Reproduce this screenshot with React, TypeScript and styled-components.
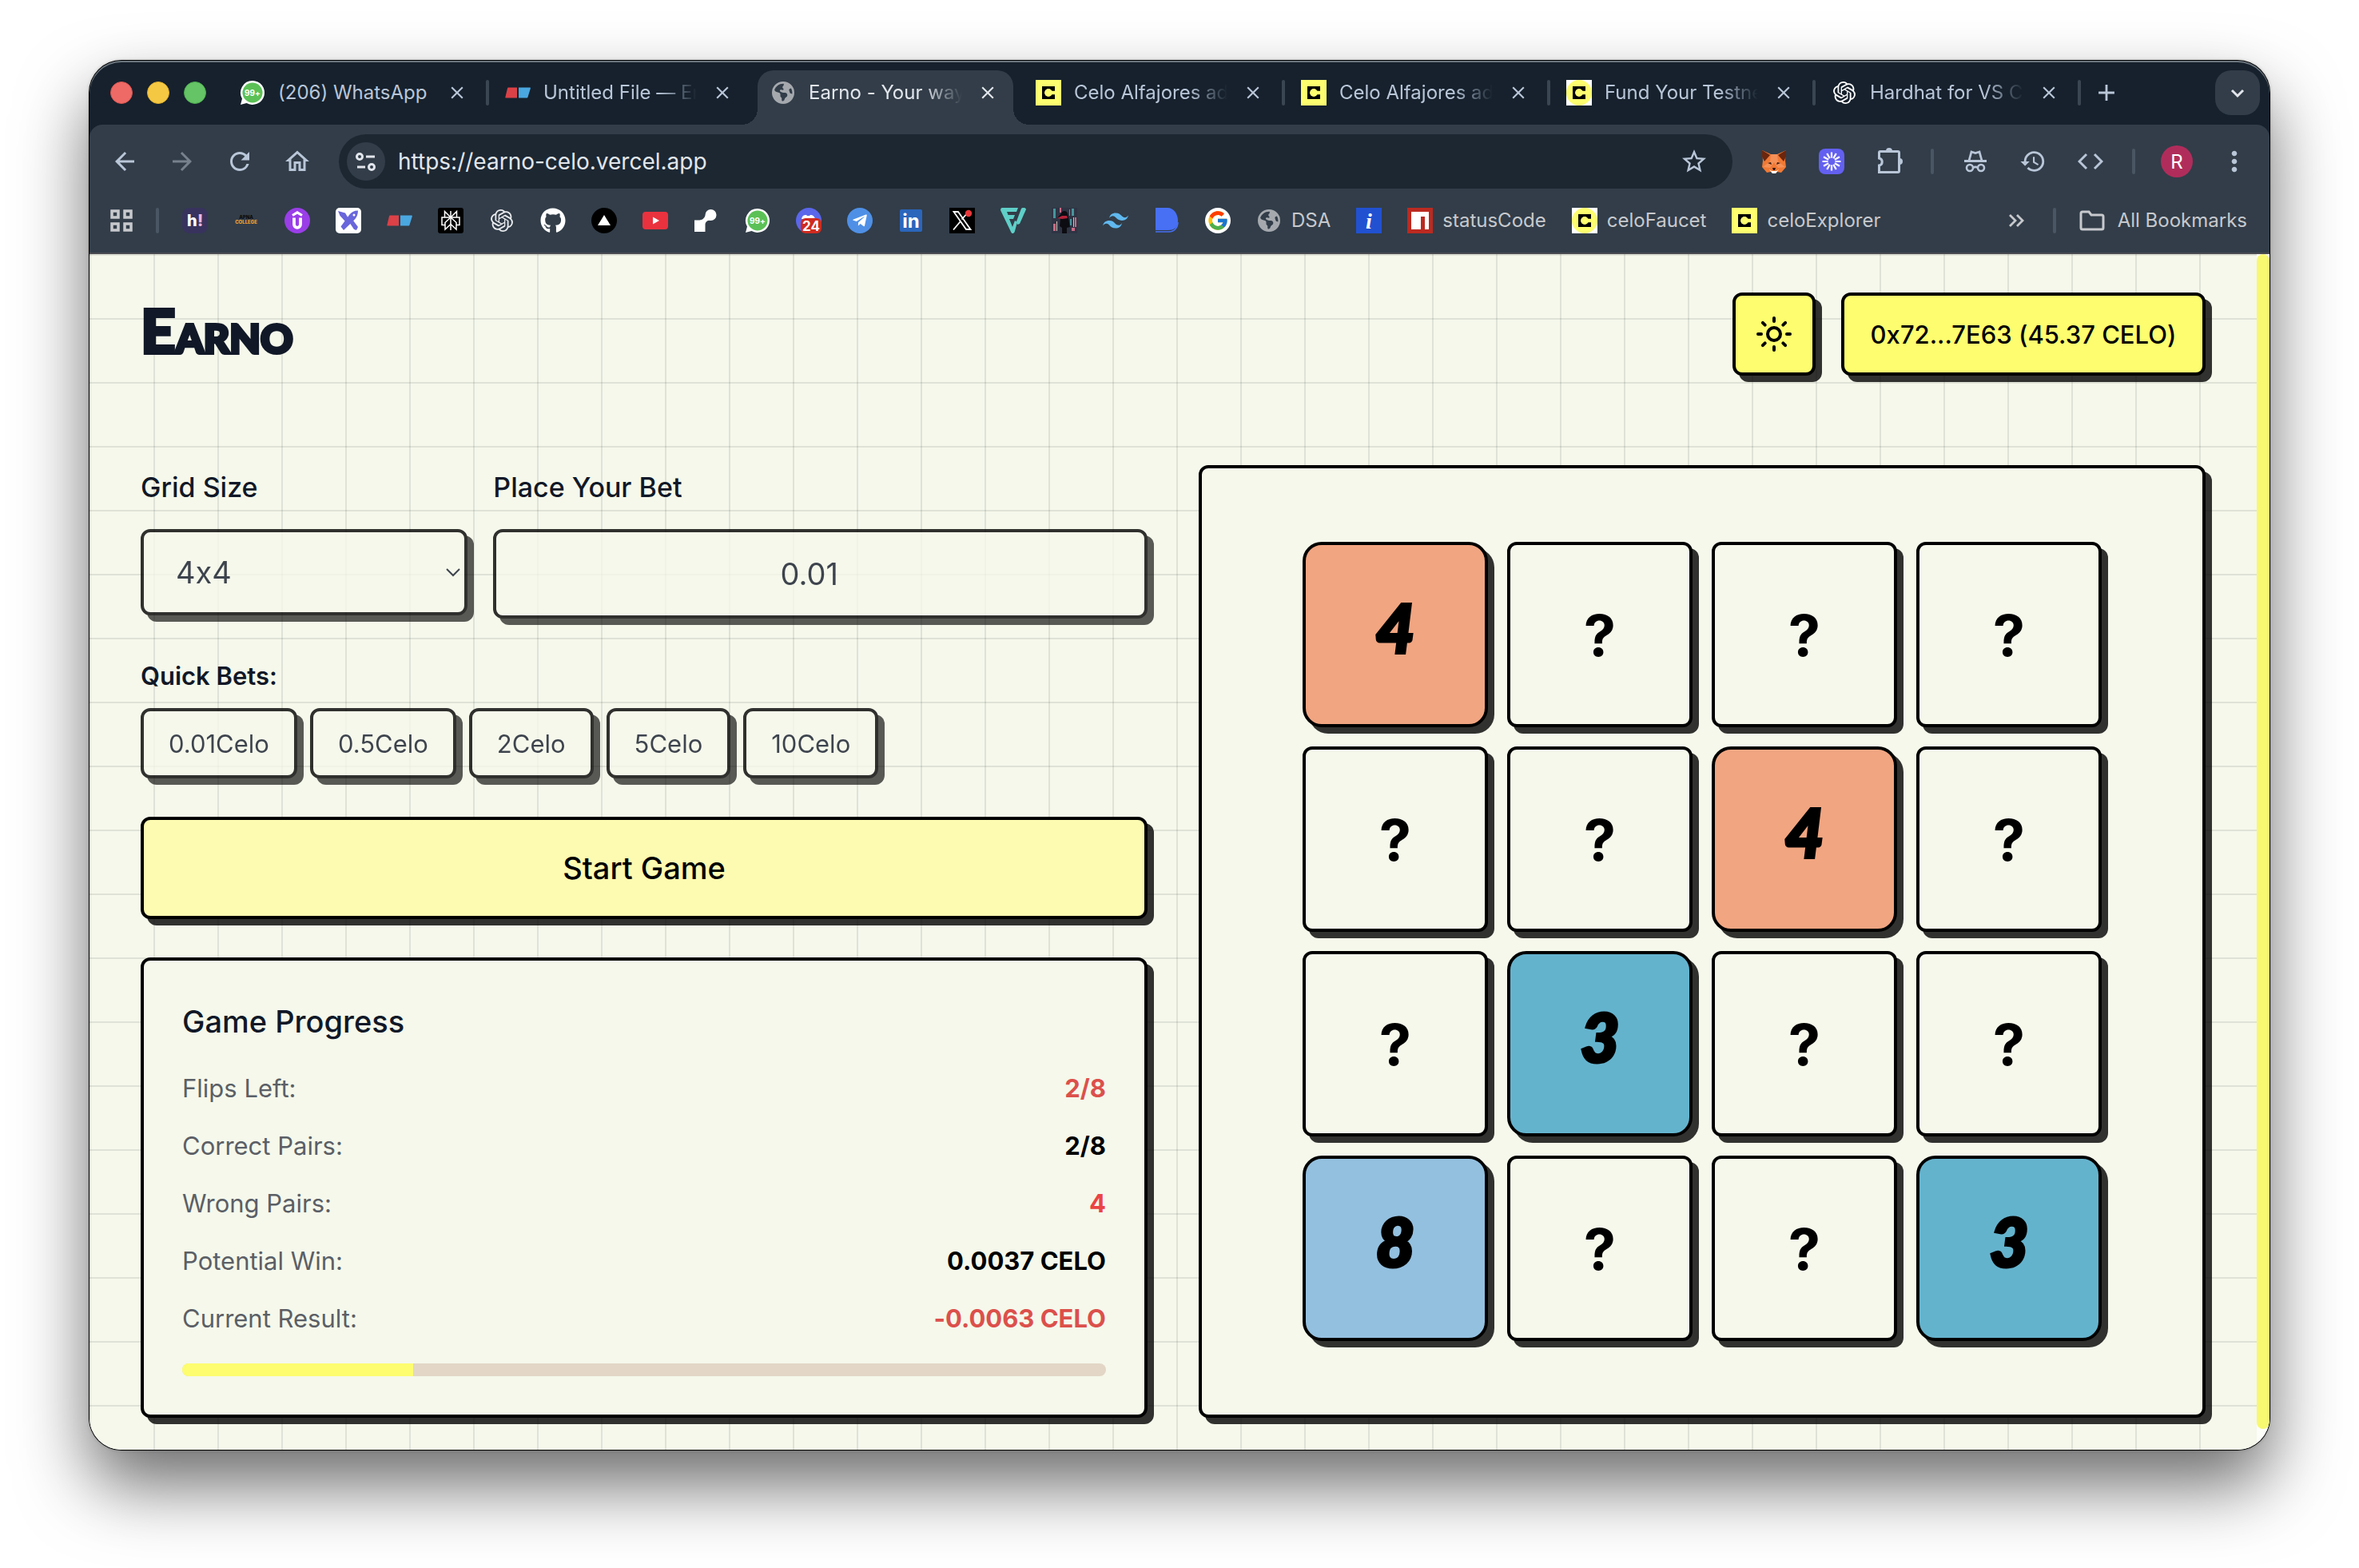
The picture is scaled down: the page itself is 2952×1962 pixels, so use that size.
import React, { useState } from "react";
import styled, { createGlobalStyle } from "styled-components";
import { Sun } from "lucide-react";
import {
  MdArrowBack,
  MdArrowForward,
  MdRefresh,
  MdOutlineHome,
  MdStarOutline,
  MdHistory,
  MdMoreVert,
  MdClose,
  MdAdd,
} from "react-icons/md";
import { FaEarthAmericas } from "react-icons/fa6";
import { FaGithub, FaTelegramPlane } from "react-icons/fa";
import { SiOpenai, SiTailwindcss } from "react-icons/si";
import { FcGoogle } from "react-icons/fc";

const ink = "#111827";
const paper = "#f5f8eb";
const sun = "#fdfd6f";
const chrome = "#323d49";
const chromeDark = "#16212d";
const chromeIcon = "#b9c6d8";
const ui = `Inter, "Liberation Sans", sans-serif`;

const GlobalStyle = createGlobalStyle`
  *, *::before, *::after { box-sizing: border-box; }
  body { margin: 0; background: #fff; font-family: ${ui}; font-feature-settings: "calt" 0; }
  button, input, select { font-family: inherit; font-feature-settings: inherit; margin: 0; }
  button { cursor: pointer; }
  svg { display: block; flex: none; }
`;

/* ---------- desktop and window ---------- */

const Desktop = styled.div`
  min-height: 100vh;
  padding: 76px 112px 148px;
  overflow: hidden;
  background: #fff;
`;

const Window = styled.div`
  border-radius: 40px;
  background: ${chromeDark};
  box-shadow: 0 0 0 1px #000, 0 0 4px rgba(0, 0, 0, 0.3),
    0 44px 88px rgba(0, 0, 0, 0.58);
`;

const WindowClip = styled.div`
  overflow: hidden;
  border-radius: 40px;
  box-shadow: inset 0 2px 0 #6b757d;
`;

/* ---------- tab strip ---------- */

const TabStrip = styled.div`
  display: flex;
  align-items: flex-end;
  height: 80px;
  padding: 12px 12px 0 26px;
`;

const Lights = styled.div`
  display: flex;
  gap: 18px;
  width: 140px;
  height: 56px;
  align-items: center;
  align-self: flex-start;
`;

const Light = styled.span<{ $color: string; $edge: string }>`
  width: 28px;
  height: 28px;
  border-radius: 50%;
  background: ${(p) => p.$color};
  border: 1px solid ${(p) => p.$edge};
`;

const Tab = styled.div<{ $active?: boolean; $divider?: boolean }>`
  position: relative;
  display: flex;
  align-items: center;
  width: 332px;
  height: 68px;
  padding: 0 22px 12px 22px;
  color: ${(p) => (p.$active ? "#e2e6ec" : chromeIcon)};

  ${(p) =>
    p.$active &&
    `
    &::before {
      content: "";
      position: absolute;
      inset: 0 6px;
      border-radius: 20px 20px 0 0;
      background: ${chrome};
    }
    &::after {
      content: "";
      position: absolute;
      left: -14px;
      right: -14px;
      bottom: 0;
      height: 20px;
      background:
        radial-gradient(circle at 0 0, transparent 20px, ${chrome} 20px) left / 20px 20px no-repeat,
        radial-gradient(circle at 100% 0, transparent 20px, ${chrome} 20px) right / 20px 20px no-repeat;
    }
  `}

  ${(p) =>
    p.$divider &&
    `
    &::after {
      content: "";
      position: absolute;
      right: -2px;
      top: 12px;
      width: 4px;
      height: 32px;
      border-radius: 2px;
      background: #3a4652;
    }
  `}

  & > * { position: relative; z-index: 1; }
`;

const TabTitle = styled.a`
  flex: 1;
  min-width: 0;
  margin: 0 16px;
  color: inherit;
  font-size: 24px;
  line-height: 32px;
  text-decoration: none;
  white-space: nowrap;
  mask-image: linear-gradient(to right, #000 calc(100% - 48px), transparent);
`;

const FullTitle = styled(TabTitle)`
  mask-image: none;
`;

const IconButton = styled.button<{ $size?: number; $dim?: boolean }>`
  display: grid;
  place-items: center;
  flex: none;
  width: ${(p) => p.$size ?? 40}px;
  height: ${(p) => p.$size ?? 40}px;
  padding: 0;
  border: 0;
  border-radius: 12px;
  background: none;
  color: ${(p) => (p.$dim ? "#77818d" : chromeIcon)};
`;

const TabClose = styled(IconButton)`
  color: inherit;
`;

const NewTab = styled(IconButton)`
  margin: 0 0 20px 14px;
`;

const TabSearch = styled(IconButton)`
  margin: 0 0 12px auto;
  border-radius: 20px;
  background: ${chrome};
  color: #e2e6ec;
`;

/* ---------- toolbar ---------- */

const Toolbar = styled.div`
  display: flex;
  align-items: center;
  height: 92px;
  padding: 0 24px;
  border-radius: 16px 16px 0 0;
  background: ${chrome};
`;

const NavGroup = styled.div`
  display: flex;
  gap: 32px;
  margin-right: 32px;
`;

const AddressBar = styled.div`
  display: flex;
  flex: 1;
  align-items: center;
  height: 68px;
  padding: 0 28px 0 10px;
  border-radius: 34px;
  background: #1c2732;
`;

const SiteInfo = styled(IconButton)`
  border-radius: 50%;
  background: ${chrome};
  color: #e2e6ec;
`;

const Address = styled.input`
  flex: 1;
  min-width: 0;
  padding: 0 0 0 16px;
  border: 0;
  outline: 0;
  background: none;
  color: #e2e6ec;
  font-size: 28px;
  line-height: 40px;
`;

const ToolGroup = styled.div`
  display: flex;
  align-items: center;
  gap: 32px;
  margin-left: 32px;
`;

const Divider = styled.span`
  width: 4px;
  height: 32px;
  border-radius: 2px;
  background: #4a5663;
`;

const Avatar = styled(IconButton)`
  border-radius: 50%;
  background: #b02d5b;
  color: #fff;
  font-size: 24px;
`;

/* ---------- bookmarks ---------- */

const BookmarksBar = styled.nav`
  display: flex;
  align-items: center;
  gap: 32px;
  height: 68px;
  padding: 0 28px 12px 26px;
  background: ${chrome};
  color: #c7c9cd;
`;

const Bookmark = styled.a`
  display: flex;
  align-items: center;
  gap: 12px;
  color: inherit;
  font-size: 24px;
  line-height: 32px;
  text-decoration: none;
  white-space: nowrap;
`;

const AllBookmarks = styled(Bookmark)`
  gap: 16px;
`;

const BarDivider = styled(Divider)`
  margin: 0 -3px;
`;

const Spacer = styled.span`
  flex: 1;
`;

/* ---------- page ---------- */

const Viewport = styled.div`
  display: flex;
  border-top: 2px solid #4b4c52;
  background: #fff;
`;

const Scrollbar = styled.div`
  width: 16px;
  padding-bottom: 26px;
  background: #fdfdfa;
`;

const ScrollThumb = styled.div`
  height: 100%;
  border-radius: 8px;
  background: #f8f871;
`;

const Page = styled.div`
  flex: 1;
  min-width: 0;
  padding: 48px 64px 40px;
  background-color: ${paper};
  background-image: linear-gradient(rgba(0, 0, 0, 0.09) 2px, transparent 2px),
    linear-gradient(90deg, rgba(0, 0, 0, 0.09) 2px, transparent 2px);
  background-size: 80px 80px;
  color: ${ink};
`;

const Header = styled.header`
  display: flex;
  align-items: center;
  gap: 32px;
  margin-bottom: 112px;
`;

const Logo = styled.a`
  margin-right: auto;
  color: ${ink};
  font-family: Lato, ${ui};
  font-size: 50px;
  font-weight: 900;
  line-height: 72px;
  text-decoration: none;
  -webkit-text-stroke: 4px ${ink};

  &::first-letter {
    font-size: 76px;
  }
`;

const raised = `
  border: 4px solid #000;
  border-radius: 12px;
  box-shadow: 8px 8px 0 rgba(0, 0, 0, 0.8);
`;

const HeaderButton = styled.button`
  ${raised}
  display: grid;
  place-items: center;
  height: 104px;
  min-width: 104px;
  padding: 0;
  background: ${sun};
  color: #000;
  font-size: 31px;
  font-weight: 500;
`;

const WalletButton = styled(HeaderButton)`
  width: 456px;
`;

const Columns = styled.main`
  display: grid;
  grid-template-columns: 1fr 1fr;
  gap: 64px;
`;

const Controls = styled.section`
  display: flex;
  flex-direction: column;
  gap: 48px;
`;

const BetRow = styled.div`
  display: grid;
  grid-template-columns: 1fr 2fr;
  gap: 32px;
`;

const Field = styled.div`
  display: flex;
  flex-direction: column;
  gap: 24px;
`;

const Label = styled.label`
  font-size: 34px;
  font-weight: 500;
  line-height: 56px;
`;

const fieldBox = `
  ${raised}
  width: 100%;
  padding: 0 40px;
  background: ${paper};
  color: ${ink};
  font-size: 38px;
  opacity: 0.8;
`;

const SelectWrap = styled.div`
  position: relative;
`;

const GridSelect = styled.select`
  ${fieldBox}
  height: 108px;
  appearance: none;
`;

const SelectArrow = styled.svg`
  position: absolute;
  right: 8px;
  top: 48px;
  opacity: 0.8;
  pointer-events: none;
`;

const BetInput = styled.input`
  ${fieldBox}
  height: 112px;
  padding-right: 68px;
  text-align: center;
`;

const QuickBets = styled.div`
  display: flex;
  flex-direction: column;
  gap: 16px;
`;

const QuickTitle = styled.h2`
  margin: 0;
  font-size: 31px;
  font-weight: 600;
  line-height: 48px;
`;

const QuickRow = styled.div`
  display: flex;
  gap: 16px;
`;

const QuickButton = styled.button`
  ${raised}
  height: 88px;
  padding: 0 31px;
  background: ${paper};
  color: ${ink};
  font-size: 31px;
  opacity: 0.8;
`;

const StartButton = styled.button`
  ${raised}
  height: 128px;
  background: #fdfab1;
  color: #000;
  font-size: 38px;
  font-weight: 500;
`;

const ProgressCard = styled.section`
  ${raised}
  padding: 48px;
  background: ${paper};
`;

const CardTitle = styled.h2`
  margin: 0 0 32px;
  font-size: 38px;
  font-weight: 500;
  line-height: 56px;
`;

const Stats = styled.dl`
  display: flex;
  flex-direction: column;
  gap: 24px;
  margin: 0 0 32px;
`;

const Stat = styled.div`
  display: flex;
  justify-content: space-between;
  font-size: 31px;
  line-height: 48px;
`;

const StatName = styled.dt`
  color: #5b5f66;
`;

const StatValue = styled.dd<{ $color: string }>`
  margin: 0;
  color: ${(p) => p.$color};
  font-weight: 700;
`;

const Track = styled.div`
  height: 16px;
  overflow: hidden;
  border-radius: 8px;
  background: #e3d6c6;
`;

const Fill = styled.div`
  height: 100%;
  background: ${sun};
`;

const Board = styled.section`
  ${raised}
  display: grid;
  place-items: center;
  padding: 92px;
  background: ${paper};
`;

const Tiles = styled.div`
  display: grid;
  grid-template-columns: repeat(4, 1fr);
  gap: 24px;
  width: 100%;
  max-width: 1000px;
`;

const Tile = styled.button<{ $color?: string }>`
  ${raised}
  display: grid;
  place-items: center;
  aspect-ratio: 1;
  padding: 0;
  background: ${paper};
  color: #000;
  font-size: 72px;
  font-weight: 700;
`;

const OpenTile = styled(Tile)`
  padding-bottom: 20px;
  border-radius: 24px;
  background: ${(p) => p.$color};
  font-family: Lato, ${ui};
  font-size: 84px;
  font-style: italic;
  font-weight: 900;
  -webkit-text-stroke: 4px #000;
`;

/* ---------- drawings ---------- */

const Art = ({ children, box = 32 }: { children: React.ReactNode; box?: number }) => (
  <svg width={box} height={box} viewBox={`0 0 ${box} ${box}`} fill="none" aria-hidden="true">
    {children}
  </svg>
);

const CeloIcon = ({ round }: { round?: boolean }) => (
  <Art>
    <rect width="32" height="32" fill={round ? "#fff" : sun} />
    {round && <circle cx="16" cy="16" r="16" fill={sun} />}
    <rect x="8" y="8" width="16" height="16" fill="#000" />
    <circle cx="16" cy="16" r="5" fill={sun} />
    <path d="M16 13.500h8v5h-8z" fill={sun} />
    <path d="M8 8h16v5.500h-3.500A5 5 0 0 0 11 16H8zM8 16h3a5 5 0 0 0 9.500 2.500H24V24H8z" fill="#000" />
  </Art>
);

const WhatsappIcon = () => (
  <Art>
    <path d="M16 1a15 15 0 1 1-7.500 28L1 31l2-7.500A15 15 0 0 1 16 1z" fill="#fff" />
    <circle cx="16" cy="16" r="12.500" fill="#5bc156" />
    <text x="16" y="20" textAnchor="middle" fontSize="10" fontWeight="700" fill="#fff">99+</text>
  </Art>
);

const RemixIcon = () => (
  <Art>
    <path d="M4 9.500h11v13H1.500c-1 0-1.500-.5-1-1.500L3 10.500c.2-.7.500-1 1-1z" fill="#db4147" />
    <path d="M17 9.500h14c.8 0 1 .5.800 1.200L28.500 21.500c-.3.700-.6 1-1.300 1H17z" fill="#4aa7e0" />
  </Art>
);

const HashnodeIcon = () => (
  <Art>
    <rect width="32" height="32" rx="9" fill="#38335e" />
    <text x="6" y="23" fontSize="20" fontWeight="800" fill="#fff">h</text>
    <text x="19" y="23" fontSize="20" fontWeight="800" fill="#f2b5dd">!</text>
  </Art>
);

const ApnaIcon = () => (
  <Art>
    <text x="16" y="14" textAnchor="middle" fontSize="6" fontWeight="800" fill="#0b0b0b">APNA</text>
    <text x="16" y="20" textAnchor="middle" fontSize="6" fontWeight="800" fill="#f0a12f">COLLEGE</text>
  </Art>
);

const UdemyIcon = () => (
  <Art>
    <circle cx="16" cy="16" r="16" fill="#9a3ee8" />
    <path d="M10 9.500l6-3.700 6 3.700" stroke="#fff" strokeWidth="3.200" />
    <path d="M12 12.500v8.300a4 4 0 0 0 8 0v-8.300" stroke="#fff" strokeWidth="3.800" />
  </Art>
);

const ExcalidrawIcon = () => (
  <Art>
    <rect width="32" height="32" rx="5" fill="#fff" />
    <path d="M3 4l9 2.500 3.500 6L12 17 5.500 10z" fill="#6965db" />
    <path d="M18 19.500l4-3.500 6 8-2 4-3-1z" fill="#6965db" />
    <path d="M28 3.500c-5 0-8.500 2-11 5.500L6.500 23.500 10 28l12-11.500C26 13 28 9 28 3.500z" fill="#6965db" />
    <circle cx="23" cy="9" r="1.500" fill="#fff" />
  </Art>
);

const PerplexityIcon = () => (
  <Art>
    <rect width="32" height="32" rx="3" fill="#000" />
    <g stroke="#fff" strokeWidth="1.500">
      <path d="M16 4v24M8.500 4.500L16 12l7.500-7.500V12h-15zM8.500 12H5v9.500h4M23.500 12H27v9.500h-4" />
      <path d="M16 12l-7 6.500v8.500l7-6.500 7 6.500v-8.500z" />
    </g>
  </Art>
);

const TriangleIcon = () => (
  <Art>
    <circle cx="16" cy="16" r="16" fill="#000" />
    <path d="M16 9l8 13H8z" fill="#fff" />
  </Art>
);

const YoutubeIcon = () => (
  <Art>
    <rect y="5" width="32" height="22" rx="4" fill="#ea323f" />
    <path d="M13 11.500l8 4.500-8 4.500z" fill="#fff" />
  </Art>
);

const NodeIcon = () => (
  <Art>
    <circle cx="21.500" cy="9" r="7" fill="#fff" />
    <path d="M1 15.500h5c5 0 7-2 9-6.500l7 6.500c-6 0-7.500 3-7.500 6V30H1z" fill="#fff" />
  </Art>
);

const DiscordIcon = () => (
  <Art>
    <circle cx="16" cy="16" r="16" fill="#5b67ea" />
    <path d="M7 14c1-4 2.500-5 6-5l1 1h3l1-1c3 0 5 1 6 5z" fill="#fff" />
    <rect x="6" y="13" width="26" height="19" rx="6" fill="#cf2b20" />
    <text x="19" y="29" textAnchor="middle" fontSize="17" fontWeight="700" fill="#fff">24</text>
  </Art>
);

const RoundBadge = styled.span<{ $color: string }>`
  display: grid;
  place-items: center;
  flex: none;
  width: 32px;
  height: 32px;
  border-radius: 50%;
  background: ${(p) => p.$color};
  color: #fff;
`;

const LinkedinIcon = () => (
  <Art>
    <rect x="2" y="2" width="28" height="28" rx="2" fill="#2a66bc" />
    <text x="16" y="25" textAnchor="middle" fontSize="24" fontWeight="700" fill="#fff">in</text>
  </Art>
);

const XIcon = () => (
  <Art>
    <rect width="32" height="32" fill="#000" />
    <path d="M5.500 5h5.500L26.500 27H21zM24 5l-8.500 9.500M13.500 17.500L5 27.500" stroke="#fff" strokeWidth="1.800" />
    <circle cx="24" cy="7" r="4.200" fill="#e8383b" />
  </Art>
);

const FIcon = () => (
  <Art>
    <g fill="#5fcfc8">
      <path d="M2 0h20l-2 5H8l1.500 4H18l-2 5h-5l4 10 3-8 3 2-3 11c-1 4-4 4-5 1L0 3c0-2 1-3 2-3z" />
      <path d="M26 1c2-2 6-1 6 1l-8 18-3 1-1-4z" />
    </g>
  </Art>
);

const PhotoIcon = () => (
  <Art>
    <rect width="32" height="32" fill="#2f3444" />
    <path d="M2 1h3v12H2zM25 1h3v9h-3zM23 14h2v8h-2z" fill="#46959c" />
    <path d="M10 0h2v6h-2zM22 2h1v8h-1zM29 12h2v12h-2zM2 20h3v9H2zM25 25h4v4h-4z" fill="#c96a84" />
    <path d="M6 17h1v12H6zM27 12h1v12h-1z" fill="#d9c3b8" />
    <path d="M12 7c1-4 7-4 8 0l1 5 2 12-4 1v7h-6v-7l-3-2 1-10-4 0z" fill="#0d0c12" />
    <path d="M13 10h6l1 3-7 1-6-1z" fill="#b3243a" />
  </Art>
);

const BlueTab = () => (
  <Art>
    <path d="M2 0h15c8 0 13 8 13 16 0 9-5 12-12 12H2z" fill="#4770f5" />
    <path d="M2 30h17c7 0 11-6 11-12" stroke="#4770f5" strokeWidth="1.500" />
  </Art>
);

const InfoIcon = () => (
  <Art>
    <rect width="32" height="32" fill="#2151d1" />
    <text x="16" y="26" textAnchor="middle" fontSize="28" fontStyle="italic" fontWeight="700" fontFamily="'Liberation Serif', serif" fill="#fff">i</text>
  </Art>
);

const NpmIcon = () => (
  <Art>
    <rect width="32" height="32" fill="#bb2a20" />
    <path d="M5 5h22v22h-5V11h-5v16H5z" fill="#fff" />
  </Art>
);

const FoxIcon = () => (
  <Art>
    <path d="M1 2l11 5h8l11-5-1 13 1 8-6 7-5-1-2 2h-4l-2-2-5 1-6-7 1-8z" fill="#f07a35" />
    <path d="M1 2l10 6-7 8-3-6zM31 2L21 8l7 8 3-6z" fill="#6b260d" />
    <path d="M12 7h8l1 9 9 7-9 1-5-7-5 7-9-1 9-7z" fill="#f59057" />
    <path d="M8 18l4-1 1 3zM24 18l-4-1-1 3z" fill="#3a1a0c" />
    <path d="M10 26l3 2h6l3-2-4 5h-4z" fill="#fff" />
    <path d="M14 24h4l-1 3h-2z" fill="#2a1712" />
  </Art>
);

const BurstIcon = () => (
  <Art>
    <rect width="32" height="32" rx="8" fill="#6360f0" />
    <g stroke="#fff" strokeWidth="2.200">
      {Array.from({ length: 12 }, (_, i) => (
        <path key={i} d="M16 4.500v7" transform={`rotate(${i * 30} 16 16)`} />
      ))}
    </g>
  </Art>
);

const PuzzleIcon = () => (
  <Art box={36}>
    <path d="M5.500 7A1.500 1.500 0 0 1 7 5.500h22A1.500 1.500 0 0 1 30.500 7v23a1.500 1.500 0 0 1-1.500 1.500H5.500V23c5-1 5-8 0-9z" stroke="currentColor" strokeWidth="3" />
    <path d="M14 5a4 4 0 0 1 8 0zM31 14a4 4 0 0 1 0 8z" fill="currentColor" />
  </Art>
);

const IncognitoIcon = () => (
  <Art>
    <path d="M2 15.500h28" stroke="currentColor" strokeWidth="3" />
    <path d="M8 15l3-11 5 1.500L21 4l3 11" stroke="currentColor" strokeWidth="2.800" />
    <circle cx="9" cy="24" r="4" stroke="currentColor" strokeWidth="2.600" />
    <circle cx="23" cy="24" r="4" stroke="currentColor" strokeWidth="2.600" />
    <path d="M13 24c2-1.500 4-1.500 6 0" stroke="currentColor" strokeWidth="2.600" />
  </Art>
);

const CodeIcon = () => (
  <Art>
    <path d="M11 7l-9 9 9 9M21 7l9 9-9 9" stroke="currentColor" strokeWidth="3" />
  </Art>
);

const SlidersIcon = () => (
  <Art box={28}>
    <g stroke="currentColor" strokeWidth="3">
      <circle cx="6" cy="8" r="3.500" />
      <path d="M14 8h11M3 21h10" />
      <circle cx="21" cy="21" r="3.500" />
    </g>
  </Art>
);

const AppsIcon = () => (
  <Art box={28}>
    <path d="M2 2h8v8H2zM18 2h8v8h-8zM2 18h8v8H2zM18 18h8v8h-8z" stroke="currentColor" strokeWidth="3.500" />
  </Art>
);

const ChevronsIcon = () => (
  <Art>
    <path d="M7 9l7 7-7 7M16 9l7 7-7 7" stroke="currentColor" strokeWidth="2.800" />
  </Art>
);

const FolderIcon = () => (
  <Art>
    <path d="M2 7a2 2 0 0 1 2-2h8l3 4h13a2 2 0 0 1 2 2v14a2 2 0 0 1-2 2H4a2 2 0 0 1-2-2z" stroke="currentColor" strokeWidth="3" />
  </Art>
);

const Globe = () => (
  <RoundBadge $color="transparent">
    <FaEarthAmericas size={28} color="#a5a9ae" />
  </RoundBadge>
);

/* ---------- data ---------- */

const tabs = [
  { title: "(206) WhatsApp", icon: <WhatsappIcon />, divider: true, full: true },
  { title: "Untitled File — Er", icon: <RemixIcon /> },
  { title: "Earno - Your way", icon: <Globe />, active: true },
  { title: "Celo Alfajores ad", icon: <CeloIcon />, divider: true },
  { title: "Celo Alfajores ad", icon: <CeloIcon />, divider: true },
  { title: "Fund Your Testne", icon: <CeloIcon round />, divider: true },
  { title: "Hardhat for VS C", icon: <Art><SiOpenai x={2} y={2} size={28} color="#fff" /></Art>, divider: true },
];

const bookmarks: { name: string; icon: React.ReactNode; label?: boolean }[] = [
  { name: "Hashnode", icon: <HashnodeIcon /> },
  { name: "Apna College", icon: <ApnaIcon /> },
  { name: "Udemy", icon: <UdemyIcon /> },
  { name: "Excalidraw", icon: <ExcalidrawIcon /> },
  { name: "Remix", icon: <RemixIcon /> },
  { name: "Perplexity", icon: <PerplexityIcon /> },
  { name: "ChatGPT", icon: <Art><SiOpenai x={2} y={2} size={28} color="#e9ebee" /></Art> },
  { name: "GitHub", icon: <FaGithub size={32} color="#fff" /> },
  { name: "Vercel", icon: <TriangleIcon /> },
  { name: "YouTube", icon: <YoutubeIcon /> },
  { name: "Render", icon: <NodeIcon /> },
  { name: "WhatsApp", icon: <WhatsappIcon /> },
  { name: "Discord", icon: <DiscordIcon /> },
  { name: "Telegram", icon: <RoundBadge $color="#4f90e6"><FaTelegramPlane size={20} /></RoundBadge> },
  { name: "LinkedIn", icon: <LinkedinIcon /> },
  { name: "X", icon: <XIcon /> },
  { name: "Fonts", icon: <FIcon /> },
  { name: "Portfolio", icon: <PhotoIcon /> },
  { name: "Tailwind", icon: <SiTailwindcss size={32} color="#60b8ef" /> },
  { name: "Docs", icon: <BlueTab /> },
  { name: "Google", icon: <RoundBadge $color="#fff"><FcGoogle size={28} /></RoundBadge> },
  { name: "DSA", icon: <Globe />, label: true },
  { name: "Info", icon: <InfoIcon /> },
  { name: "statusCode", icon: <NpmIcon />, label: true },
  { name: "celoFaucet", icon: <CeloIcon round />, label: true },
  { name: "celoExplorer", icon: <CeloIcon />, label: true },
];

const quickBets = ["0.01", "0.5", "2", "5", "10"];

const stats = [
  { name: "Flips Left:", value: "2/8", color: "#dc504b" },
  { name: "Correct Pairs:", value: "2/8", color: "#000" },
  { name: "Wrong Pairs:", value: "4", color: "#eb4444" },
  { name: "Potential Win:", value: "0.0037 CELO", color: "#000" },
  { name: "Current Result:", value: "-0.0063 CELO", color: "#dc504b" },
];

const board = [4, 0, 0, 0, 0, 0, 4, 0, 0, 3, 0, 0, 8, 0, 0, 3];
const tileColors: Record<number, string> = { 3: "#64b3cd", 4: "#f1a581", 8: "#93c0df" };

/* ---------- app ---------- */

function BrowserChrome() {
  return (
    <>
      <TabStrip>
        <Lights>
          <Light $color="#ee6a66" $edge="#d9534f" />
          <Light $color="#f5c843" $edge="#dcae2c" />
          <Light $color="#65c466" $edge="#4cab4d" />
        </Lights>
        {tabs.map((t, i) => {
          const Title = t.full ? FullTitle : TabTitle;
          return (
            <Tab key={i} $active={t.active} $divider={t.divider}>
              {t.icon}
              <Title href="#">{t.title}</Title>
              <TabClose $size={32} aria-label={`Close ${t.title}`}>
                <MdClose size={26} />
              </TabClose>
            </Tab>
          );
        })}
        <NewTab aria-label="New tab"><MdAdd size={34} /></NewTab>
        <TabSearch $size={56} aria-label="Search tabs">
          <Art box={20}>
            <path d="M3 7l7 7 7-7" stroke="currentColor" strokeWidth="3" />
          </Art>
        </TabSearch>
      </TabStrip>
      <Toolbar>
        <NavGroup>
          <IconButton aria-label="Back"><MdArrowBack size={36} /></IconButton>
          <IconButton aria-label="Forward" $dim><MdArrowForward size={36} /></IconButton>
          <IconButton aria-label="Reload"><MdRefresh size={36} /></IconButton>
          <IconButton aria-label="Home"><MdOutlineHome size={36} /></IconButton>
        </NavGroup>
        <AddressBar>
          <SiteInfo $size={48} aria-label="Site information"><SlidersIcon /></SiteInfo>
          <Address aria-label="Address" defaultValue="https://earno-celo.vercel.app" />
          <IconButton aria-label="Bookmark this page"><MdStarOutline size={36} /></IconButton>
        </AddressBar>
        <ToolGroup>
          <IconButton aria-label="MetaMask"><FoxIcon /></IconButton>
          <IconButton aria-label="Loom"><BurstIcon /></IconButton>
          <IconButton aria-label="Extensions"><PuzzleIcon /></IconButton>
          <Divider />
          <IconButton aria-label="Incognito"><IncognitoIcon /></IconButton>
          <IconButton aria-label="History"><MdHistory size={34} /></IconButton>
          <IconButton aria-label="Developer tools"><CodeIcon /></IconButton>
          <Divider />
          <Avatar aria-label="Profile">R</Avatar>
          <IconButton aria-label="Menu"><MdMoreVert size={40} /></IconButton>
        </ToolGroup>
      </Toolbar>
      <BookmarksBar aria-label="Bookmarks">
        <AppsIcon />
        <BarDivider />
        {bookmarks.map((b) => (
          <Bookmark key={b.name} href="#" aria-label={b.name}>
            {b.icon}
            {b.label && b.name}
          </Bookmark>
        ))}
        <Spacer />
        <ChevronsIcon />
        <BarDivider />
        <AllBookmarks href="#"><FolderIcon /><span>All Bookmarks</span></AllBookmarks>
      </BookmarksBar>
    </>
  );
}

function GameControls() {
  const [size, setSize] = useState("4x4");
  const [bet, setBet] = useState("0.01");
  return (
    <Controls>
      <BetRow>
        <Field>
          <Label htmlFor="grid-size">Grid Size</Label>
          <SelectWrap>
            <GridSelect id="grid-size" value={size} onChange={(e) => setSize(e.target.value)}>
              <option>4x4</option>
            </GridSelect>
            <SelectArrow width="20" height="12" viewBox="0 0 20 12" fill="none">
              <path d="M2 2l8 8 8-8" stroke={ink} strokeWidth="2" />
            </SelectArrow>
          </SelectWrap>
        </Field>
        <Field>
          <Label htmlFor="bet">Place Your Bet</Label>
          <BetInput id="bet" value={bet} onChange={(e) => setBet(e.target.value)} />
        </Field>
      </BetRow>
      <QuickBets>
        <QuickTitle>Quick Bets:</QuickTitle>
        <QuickRow>
          {quickBets.map((q) => (
            <QuickButton key={q} onClick={() => setBet(q)}>{`${q}Celo`}</QuickButton>
          ))}
        </QuickRow>
      </QuickBets>
      <StartButton>Start Game</StartButton>
      <ProgressCard>
        <CardTitle>Game Progress</CardTitle>
        <Stats>
          {stats.map((s) => (
            <Stat key={s.name}>
              <StatName>{s.name}</StatName>
              <StatValue $color={s.color}>{s.value}</StatValue>
            </Stat>
          ))}
        </Stats>
        <Track role="progressbar" aria-valuenow={25} aria-valuemin={0} aria-valuemax={100} aria-label="Progress">
          <Fill style={{ width: `${(2 / 8) * 100}%` }} />
        </Track>
      </ProgressCard>
    </Controls>
  );
}

export default function App() {
  return (
    <Desktop>
      <GlobalStyle />
      <Window>
        <WindowClip>
          <BrowserChrome />
          <Viewport>
            <Page>
              <Header>
                <Logo href="#">EARNO</Logo>
                <HeaderButton aria-label="Toggle theme"><Sun size={48} /></HeaderButton>
                <WalletButton>0x72...7E63 (45.37 CELO)</WalletButton>
              </Header>
              <Columns>
                <GameControls />
                <Board aria-label="Board">
                  <Tiles>
                    {board.map((n, i) =>
                      n ? (
                        <OpenTile key={i} $color={tileColors[n]}>{n}</OpenTile>
                      ) : (
                        <Tile key={i} aria-label="Hidden card">?</Tile>
                      )
                    )}
                  </Tiles>
                </Board>
              </Columns>
            </Page>
            <Scrollbar aria-hidden="true"><ScrollThumb /></Scrollbar>
          </Viewport>
        </WindowClip>
      </Window>
    </Desktop>
  );
}
